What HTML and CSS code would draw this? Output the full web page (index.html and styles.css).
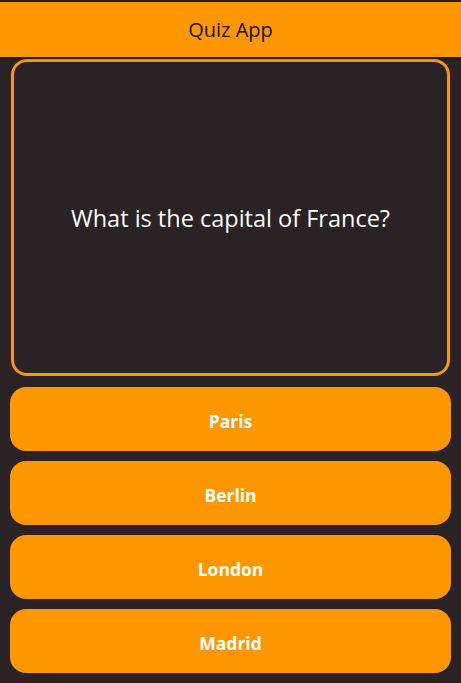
FILE: index.html
```html
<!DOCTYPE html>
<html>
<head>
<meta charset="utf-8">
<link rel="stylesheet" href="styles.css">
</head>
<body>
<div class="app">
  <header class="topbar">Quiz App</header>
  <main class="content">
    <section class="question-card">
      <p class="question">What is the capital of France?</p>
    </section>
    <div class="answers">
      <button class="answer">Paris</button>
      <button class="answer">Berlin</button>
      <button class="answer">London</button>
      <button class="answer">Madrid</button>
    </div>
  </main>
</div>
</body>
</html>
```
FILE: styles.css
```css
html, body {
  margin: 0;
  padding: 0;
  background: #2a2224;
  height: 100%;
}
body {
  font-family: "Open Sans", "Noto Sans", sans-serif;
}
.app {
  padding-top: 2px;
  display: flex;
  flex-direction: column;
}
.topbar {
  height: 55px;
  background: #ff9800;
  color: #140c0c;
  font-size: 20px;
  display: flex;
  align-items: center;
  justify-content: center;
  box-shadow: 0 1px 3px rgba(0,0,0,0.45);
  position: relative;
  z-index: 1;
}
.content {
  padding: 2px 10px 0 10px;
  display: flex;
  flex-direction: column;
  gap: 11px;
}
.question-card {
  margin: 0 1px;
  height: 317px;
  box-sizing: border-box;
  border: 3px solid #f39a12;
  border-radius: 16px;
  display: flex;
  align-items: center;
  justify-content: center;
}
.question {
  margin: 0;
  color: #ffffff;
  font-size: 23.5px;
}
.answers {
  display: flex;
  flex-direction: column;
  gap: 10px;
}
.answer {
  height: 64px;
  border: none;
  border-radius: 16px;
  background: #ff9800;
  color: #ffffff;
  font-family: "Open Sans", "Noto Sans", sans-serif;
  font-weight: 700;
  font-size: 17.5px;
  padding: 3px 0 0 0;
}
```
